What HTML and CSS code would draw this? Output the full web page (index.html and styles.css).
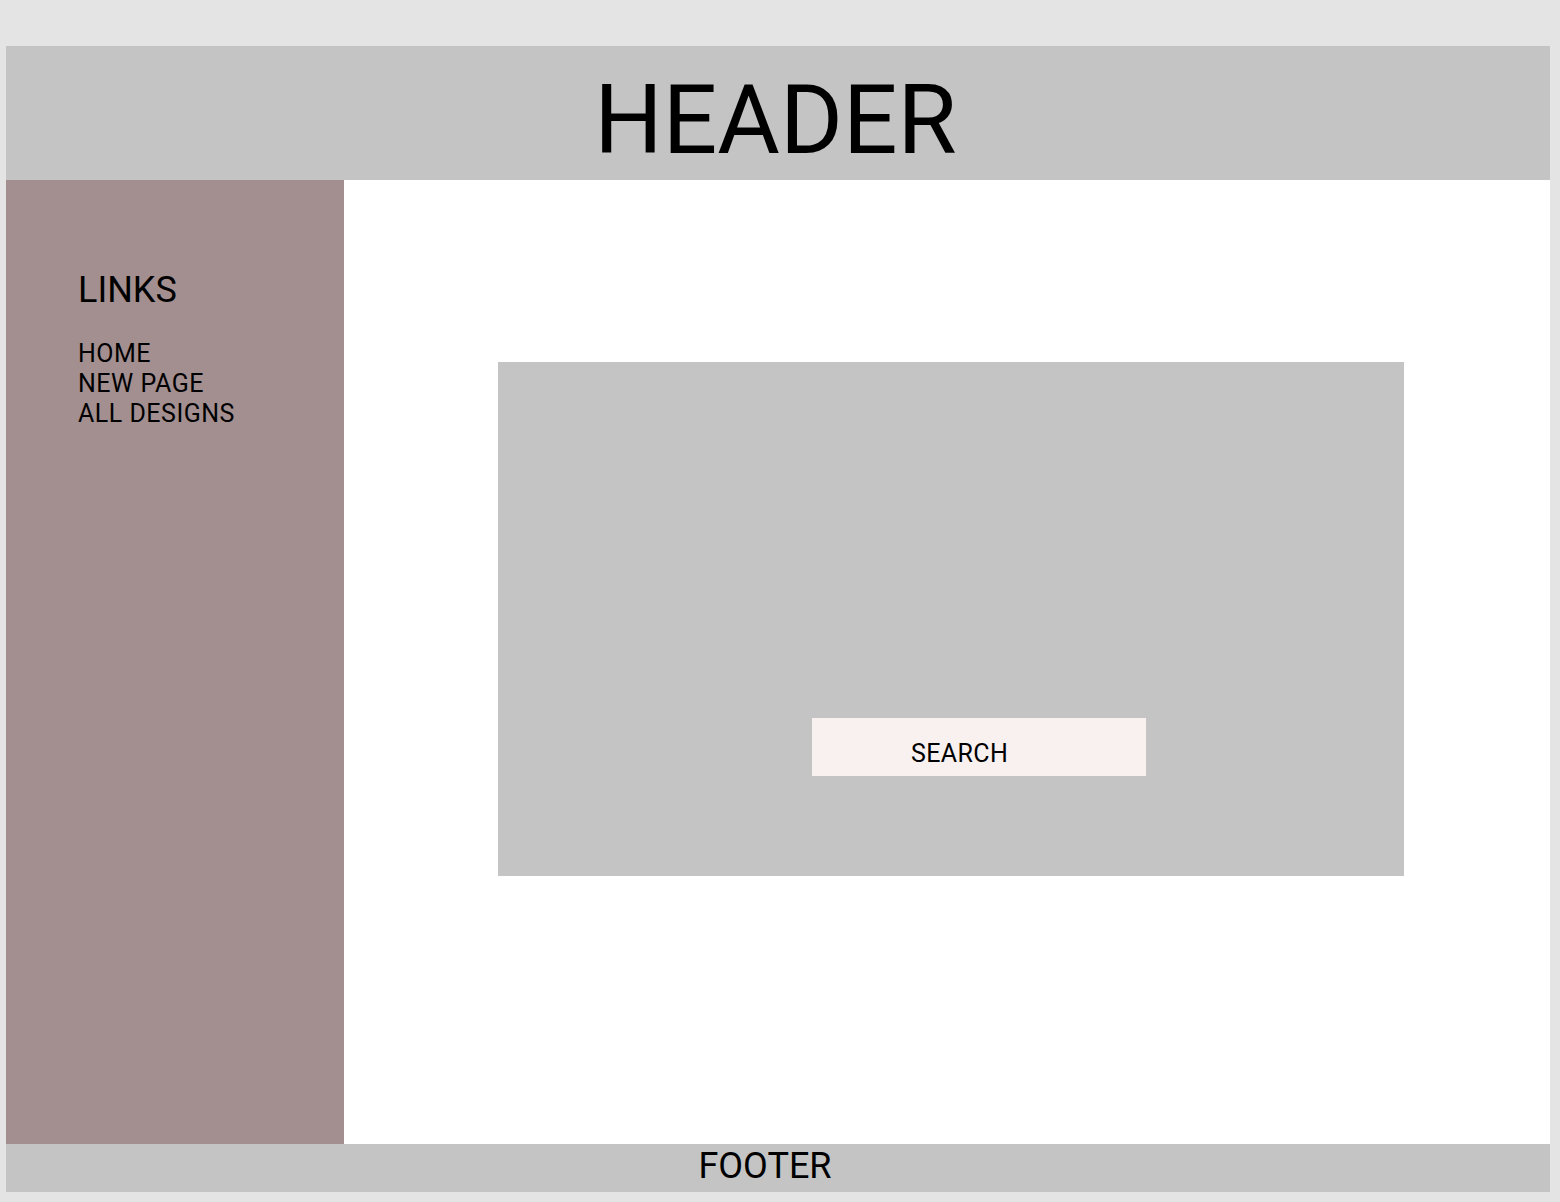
FILE: index.html
```html
<!DOCTYPE html>
<html lang="en">
<head>
<meta charset="utf-8">
<title>Layout</title>
<link rel="stylesheet" href="styles.css">
</head>
<body>
<div class="frame">
  <header class="header">HEADER</header>
  <div class="row">
    <aside class="sidebar">
      <h2 class="links-title">LINKS</h2>
      <ul class="links">
        <li>HOME</li>
        <li>NEW PAGE</li>
        <li>ALL DESIGNS</li>
      </ul>
    </aside>
    <main class="main">
      <section class="hero">
        <div class="search">SEARCH</div>
      </section>
    </main>
  </div>
  <footer class="footer">FOOTER</footer>
</div>
</body>
</html>
```
FILE: styles.css
```css
* { box-sizing: border-box; }
html, body { margin: 0; padding: 0; }
body {
  background: #e4e4e4;
  font-family: Roboto, "Liberation Sans", sans-serif;
  color: #000;
  padding: 46px 10px 10px 6px;
  height: 1202px;
  overflow: hidden;
}
.frame {
  width: 1544px;
  display: flex;
  flex-direction: column;
}
.header {
  height: 134px;
  background: #c4c4c4;
  font-size: 96px;
  line-height: 112px;
  padding-top: 18px;
  padding-right: 5px;
  text-align: center;
}
.row {
  display: flex;
  height: 964px;
}
.sidebar {
  width: 338px;
  background: #a38f8f;
  padding: 89px 0 0 72px;
}
.links-title {
  margin: 0;
  font-size: 36px;
  font-weight: 400;
  line-height: 42px;
}
.links {
  list-style: none;
  margin: 28px 0 0;
  padding: 0;
  font-size: 25px;
  line-height: 30px;
  letter-spacing: 0.5px;
}
.main {
  flex: 1;
  background: #fff;
  padding: 182px 0 0 154px;
}
.hero {
  width: 906px;
  height: 514px;
  background: #c4c4c4;
  padding: 356px 0 0 314px;
}
.search {
  width: 334px;
  height: 58px;
  background: #f9f0f0;
  font-size: 25px;
  line-height: 29px;
  letter-spacing: 0.4px;
  padding: 21px 0 0 99px;
}
.footer {
  height: 48px;
  background: #c4c4c4;
  font-size: 36px;
  line-height: 42px;
  padding-top: 1px;
  padding-right: 26px;
  text-align: center;
}
```
